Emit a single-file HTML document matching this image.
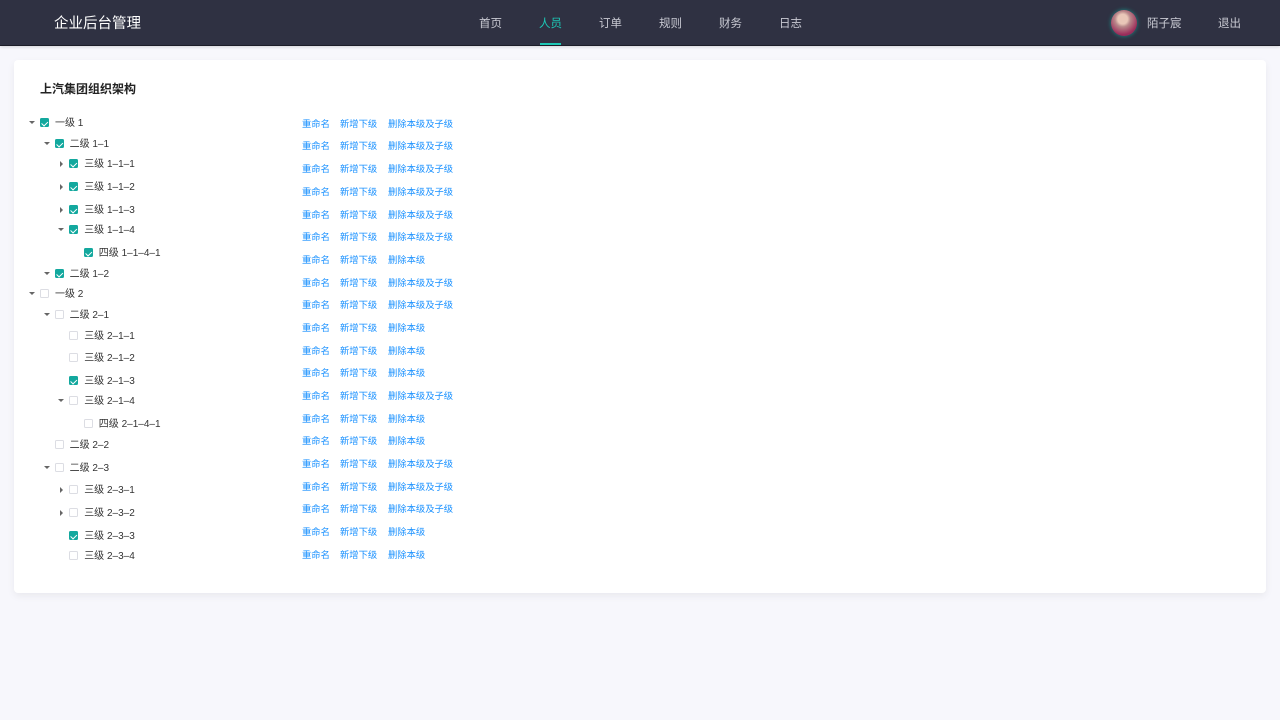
<!DOCTYPE html>
<html><head><meta charset="utf-8"><style>
*{margin:0;padding:0;box-sizing:border-box}
body{width:1280px;height:720px;background:#f7f7fc;font-family:"Liberation Sans","Noto Sans CJK SC",sans-serif;position:relative;overflow:hidden}
.hd{position:absolute;left:0;top:0;width:1280px;height:46px;background:#2f3142;border-bottom:1px solid #1c1d28;box-shadow:0 1px 3px rgba(0,0,0,.15)}
.logo{position:absolute;left:54px;top:14px;color:#fff;font-size:14.5px;line-height:20px}
.nav{position:absolute;top:16px;color:#c9cad3;font-size:11.5px;line-height:16px}
.nav.on{color:#1dc7b5}
.bar{position:absolute;left:540px;top:43px;width:21px;height:2px;background:#1dc7b5}
.av{position:absolute;left:1111px;top:10px;width:26px;height:26px;border-radius:50%;background:radial-gradient(circle at 45% 35%,#e9c7b8 0 22%,#b8888a 35%,#9c2c5a 70%,#6c4070);box-shadow:0 0 4px #1a8f87}
.card{position:absolute;left:14px;top:60px;width:1252px;height:533px;background:#fff;border-radius:4px;box-shadow:0 3px 8px rgba(0,0,0,.06)}
.title{position:absolute;left:40px;top:81px;font-size:12px;font-weight:bold;color:#222;line-height:16px}
.r{position:absolute;font-size:10px;color:#333;line-height:12px;height:12px}
.cb{position:absolute;width:9px;height:9px;border:1px solid #dcdde3;border-radius:1.5px;background:#fff}
.cb.c{background:#13a89e;border-color:#13a89e}
.cb.c:after{content:"";position:absolute;left:2px;top:0.5px;width:2.5px;height:4.5px;border:solid #fff;border-width:0 1.3px 1.3px 0;transform:rotate(45deg)}
.ad{position:absolute;width:0;height:0;border-left:3px solid transparent;border-right:3px solid transparent;border-top:3.5px solid #666}
.ar{position:absolute;width:0;height:0;border-top:3px solid transparent;border-bottom:3px solid transparent;border-left:3.5px solid #666}
.a{position:absolute;font-size:9.3px;color:#1890ff;line-height:12px}
</style></head><body>
<div class="hd">
<div class="logo">企业后台管理</div>
<div class="nav" style="left:479px">首页</div>
<div class="nav on" style="left:539px">人员</div>
<div class="nav" style="left:599px">订单</div>
<div class="nav" style="left:659px">规则</div>
<div class="nav" style="left:719px">财务</div>
<div class="nav" style="left:779px">日志</div>
<div class="bar"></div>
<div class="av"></div>
<div class="nav" style="left:1147px">陌子宸</div>
<div class="nav" style="left:1218px">退出</div>
</div>
<div class="card"></div>
<div class="title">上汽集团组织架构</div>
<div id="t"></div>
<script>
var rows=[
["一级 1",0,1,"d",123],["二级 1–1",1,1,"d",144],["三级 1–1–1",2,1,"r",164],["三级 1–1–2",2,1,"r",187],["三级 1–1–3",2,1,"r",210],["三级 1–1–4",2,1,"d",230],["四级 1–1–4–1",3,1,"",253],["二级 1–2",1,1,"d",274],
["一级 2",0,0,"d",294],["二级 2–1",1,0,"d",315],["三级 2–1–1",2,0,"",336],["三级 2–1–2",2,0,"",358],["三级 2–1–3",2,1,"",381],["三级 2–1–4",2,0,"d",401],["四级 2–1–4–1",3,0,"",424],["二级 2–2",1,0,"",445],["二级 2–3",1,0,"d",468],["三级 2–3–1",2,0,"r",490],["三级 2–3–2",2,0,"r",513],["三级 2–3–3",2,1,"",536],["三级 2–3–4",2,0,"",556]];
var h="";
rows.forEach(function(r){var x=40+r[1]*14.6,y=r[4];
if(r[3]=="d")h+='<div class="ad" style="left:'+(x-11)+'px;top:'+(y-2)+'px"></div>';
if(r[3]=="r")h+='<div class="ar" style="left:'+(x-9)+'px;top:'+(y-3)+'px"></div>';
h+='<div class="cb'+(r[2]?' c':'')+'" style="left:'+x+'px;top:'+(y-5)+'px"></div>';
h+='<div class="r" style="left:'+(x+15)+'px;top:'+(y-5)+'px">'+r[0]+'</div>';});
var ay=[123,145,168,191,214,236,259,282,304,327,350,372,395,418,440,463,486,508,531,554];
var full=[1,1,1,1,1,1,0,1,1,0,0,0,1,0,0,1,1,1,0,0];
ay.forEach(function(y,i){h+='<div class="a" style="left:302px;top:'+(y-5)+'px">重命名</div><div class="a" style="left:340px;top:'+(y-5)+'px">新增下级</div><div class="a" style="left:388px;top:'+(y-5)+'px">'+(full[i]?'删除本级及子级':'删除本级')+'</div>';});
document.getElementById("t").innerHTML=h;
</script>
</body></html>
